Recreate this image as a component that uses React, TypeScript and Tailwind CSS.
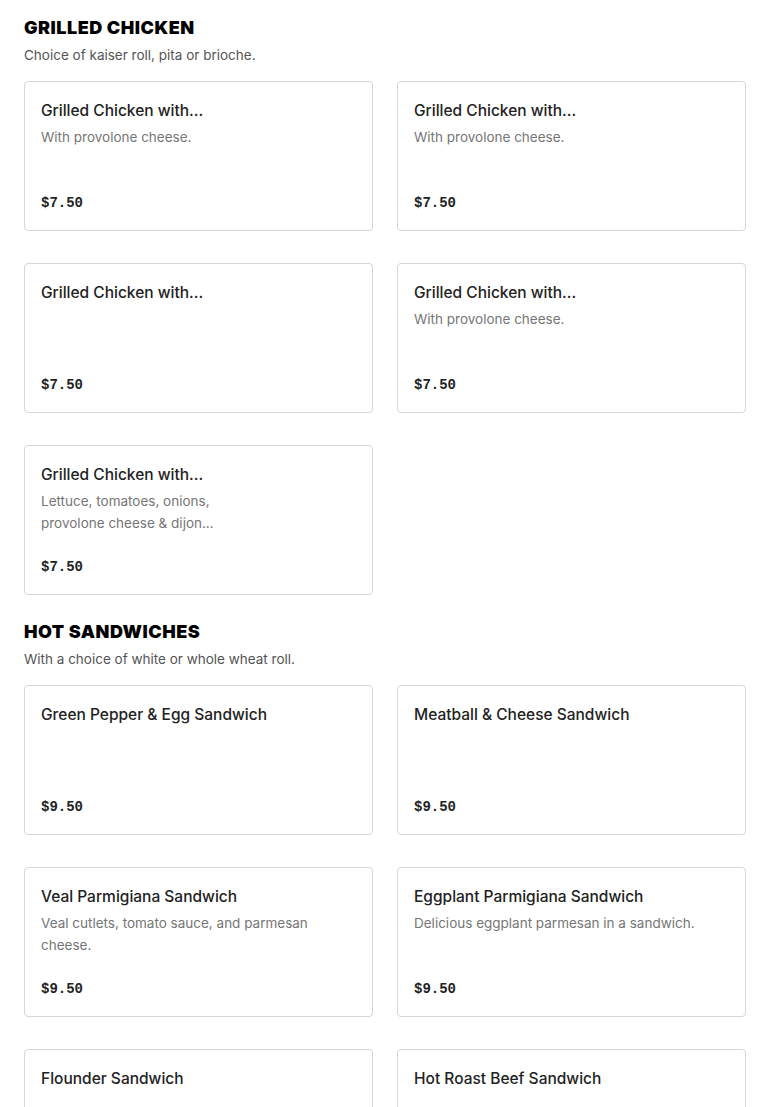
import React from "react";

type Item = { name: string; desc?: string[]; price: string };
type Section = { title: string; sub: string; items: Item[] };

const sections: Section[] = [
  {
    title: "GRILLED CHICKEN",
    sub: "Choice of kaiser roll, pita or brioche.",
    items: [
      { name: "Grilled Chicken with...", desc: ["With provolone cheese."], price: "$7.50" },
      { name: "Grilled Chicken with...", desc: ["With provolone cheese."], price: "$7.50" },
      { name: "Grilled Chicken with...", price: "$7.50" },
      { name: "Grilled Chicken with...", desc: ["With provolone cheese."], price: "$7.50" },
      { name: "Grilled Chicken with...", desc: ["Lettuce, tomatoes, onions,", "provolone cheese & dijon..."], price: "$7.50" },
    ],
  },
  {
    title: "HOT SANDWICHES",
    sub: "With a choice of white or whole wheat roll.",
    items: [
      { name: "Green Pepper & Egg Sandwich", price: "$9.50" },
      { name: "Meatball & Cheese Sandwich", price: "$9.50" },
      { name: "Veal Parmigiana Sandwich", desc: ["Veal cutlets, tomato sauce, and parmesan", "cheese."], price: "$9.50" },
      { name: "Eggplant Parmigiana Sandwich", desc: ["Delicious eggplant parmesan in a sandwich."], price: "$9.50" },
      { name: "Flounder Sandwich", price: "$9.50" },
      { name: "Hot Roast Beef Sandwich", price: "$9.50" },
    ],
  },
];

function Card({ item }: { item: Item }) {
  return (
    <div className="h-[150px] border border-[#d6d6d6] rounded-[4px] px-4 pt-[17px] pb-[15px] flex flex-col justify-between bg-white">
      <div>
        <div className="text-[15.5px] leading-[24px] font-medium text-[#222]">{item.name}</div>
        {item.desc && (
          <div className="mt-[3px] text-[13.5px] leading-[22px] text-[#767676]">
            {item.desc.map((l, i) => <div key={i}>{l}</div>)}
          </div>
        )}
      </div>
      <div className="font-['Liberation_Mono',monospace] font-bold text-[14px] leading-[24px] text-[#222]">{item.price}</div>
    </div>
  );
}

export default function App() {
  return (
    <div className="min-h-screen bg-white px-6 pt-4 pb-10 font-['Inter',sans-serif]">
      {sections.map((s, si) => (
        <div key={si} className={si > 0 ? "mt-[25px]" : ""}>
          <h2 className="text-[18px] leading-[24px] font-black tracking-[0.5px] text-black">{s.title}</h2>
          <p className="mt-[5px] text-[13.5px] leading-[20px] text-[#555]">{s.sub}</p>
          <div className="mt-4 grid grid-cols-2 gap-x-6 gap-y-8">
            {s.items.map((it, i) => <Card key={i} item={it} />)}
          </div>
        </div>
      ))}
    </div>
  );
}
